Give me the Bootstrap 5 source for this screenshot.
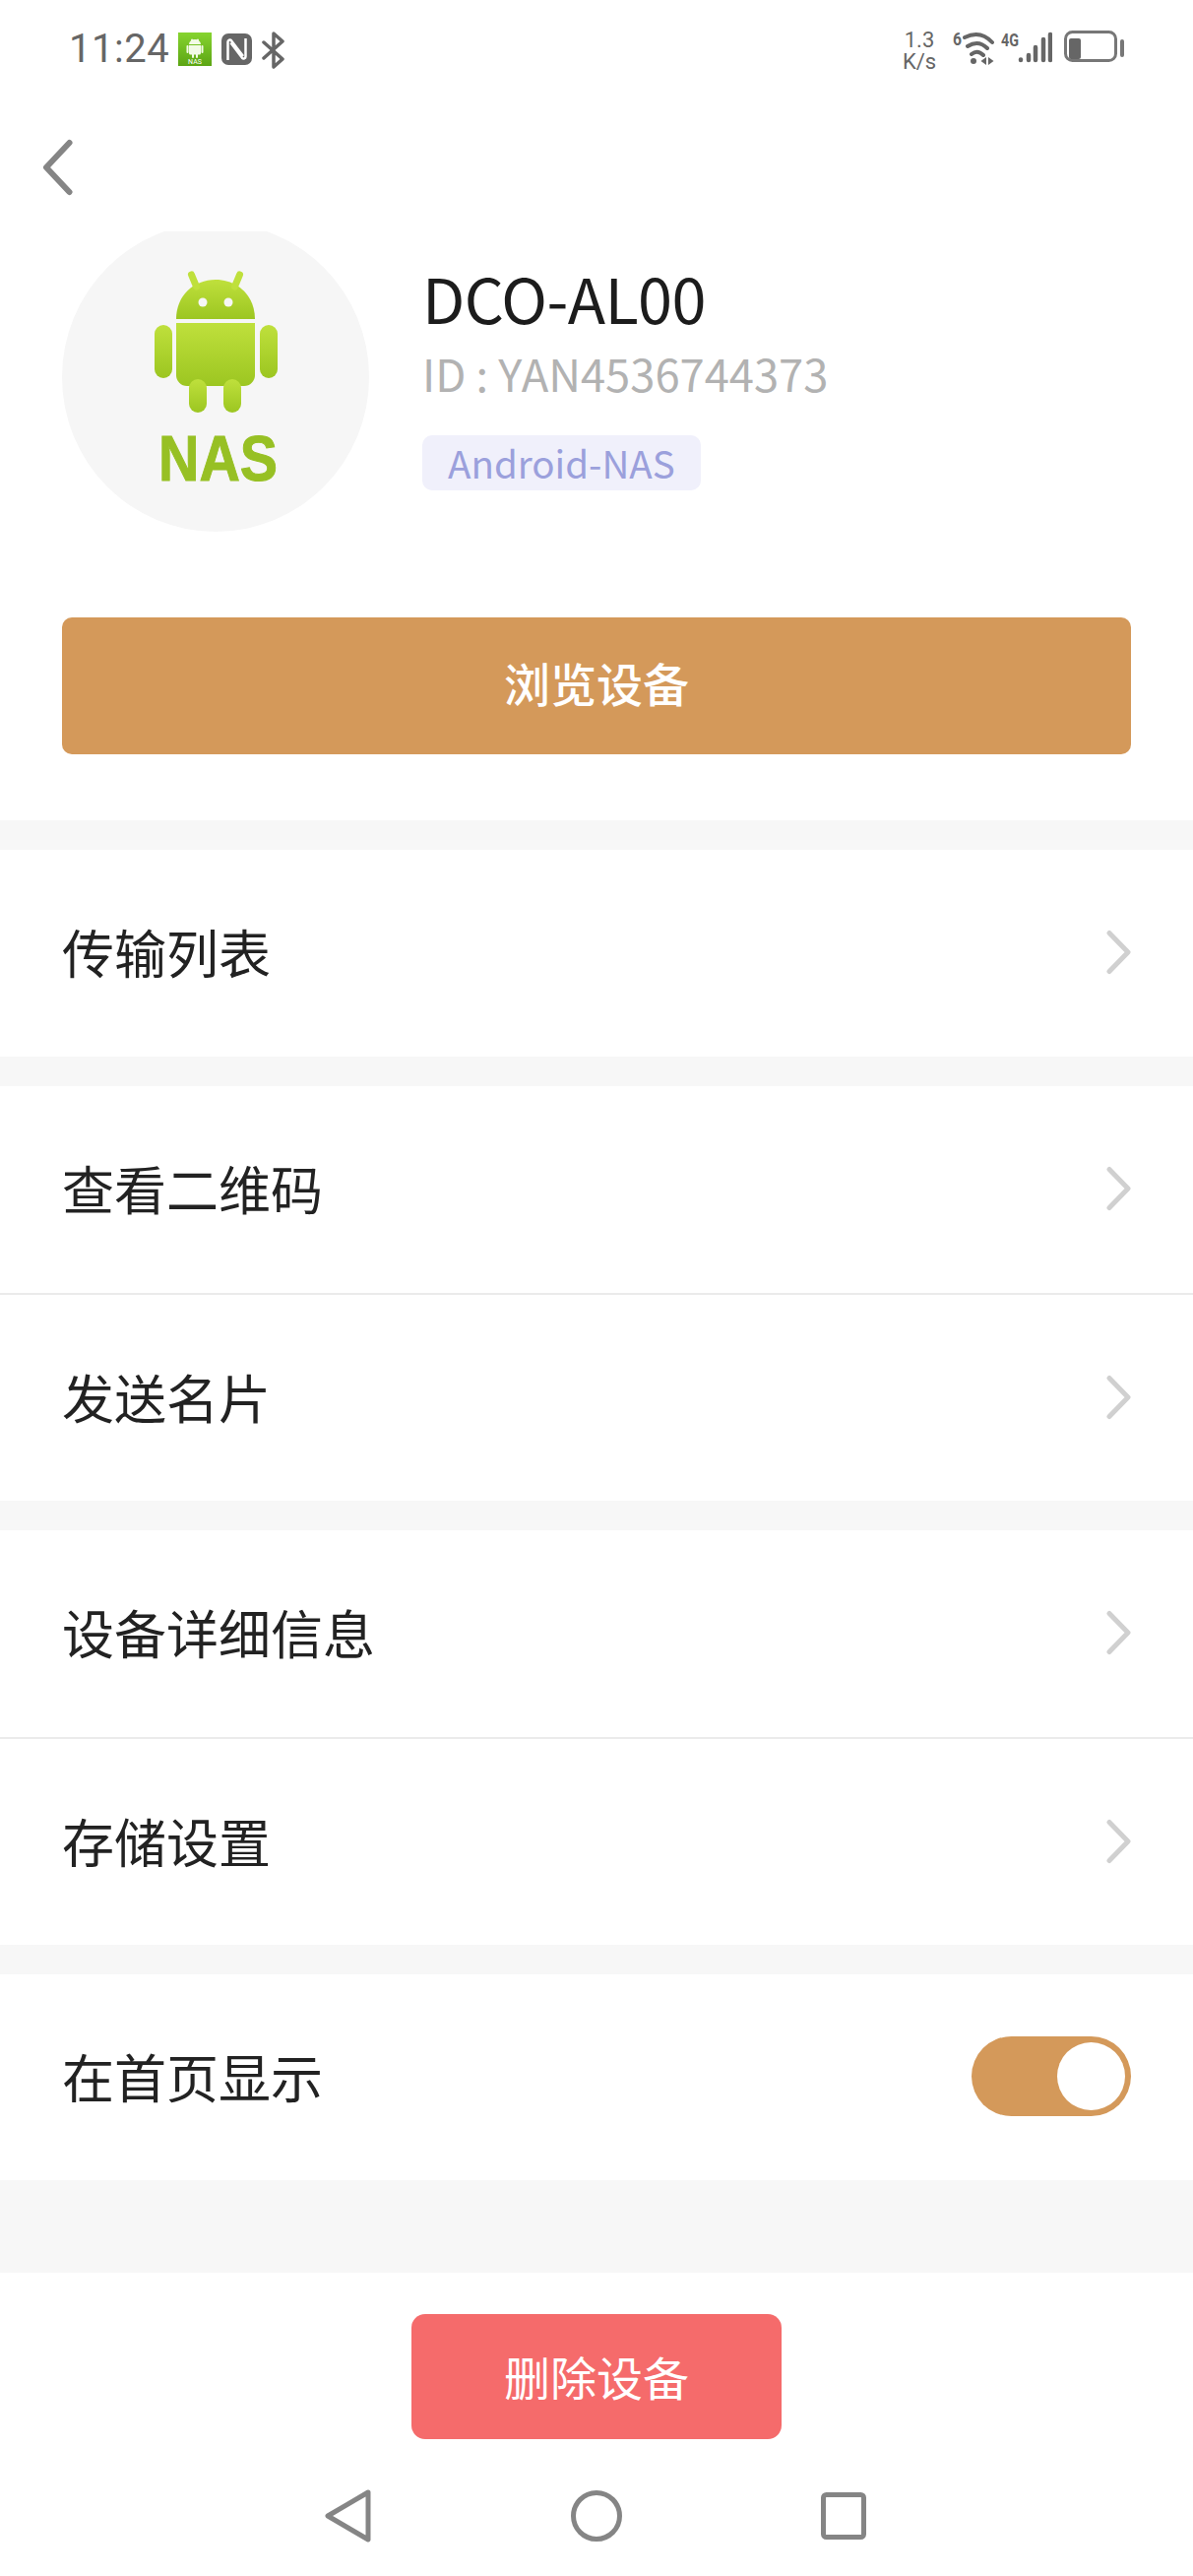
<!DOCTYPE html>
<html lang="zh-CN">
<head>
  <meta charset="UTF-8" />
  <meta name="viewport" content="width=device-width, initial-scale=1.0"/>
  <title>设备详情</title>
  <link href="https://cdn.jsdelivr.net/npm/bootstrap@5.3.2/dist/css/bootstrap.min.css" rel="stylesheet" />
  <style>
    body {
      background-color: #fff;
      font-family: "Noto Sans CJK SC", "Noto Sans", sans-serif;
      color: #222;
    }

    .phone { width: 1212px; height: 2616px; overflow: hidden; }

    .status-bar { height: 100px; padding: 30px 70px 0 70px; }
    .status-time { font-family: Roboto, sans-serif; font-size: 40px; line-height: 40px; color: #666; letter-spacing: .5px; width: 111px; }
    .speed { font-family: Roboto, sans-serif; font-size: 22px; line-height: 22px; color: #666; text-align: center; width: 36px; }

    .back-row { height: 135px; padding-left: 43px; padding-top: 41px; }

    .device-head { padding-left: 63px; }
    .avatar { width: 312px; height: 305px; flex: none; }
    .device-info { margin-left: 54px; padding-top: 32px; }
    .device-name { font-size: 63px; line-height: 70px; color: #1c1c1c; letter-spacing: -.6px; }
    .device-id { font-size: 45.300px; line-height: 50px; color: #b2b2b2; margin-top: 16px; }
    .device-tag { display: inline-block; height: 56px; line-height: 54px; padding: 0 26px; font-size: 38.500px; color: #9ba0dc; background: #f0f0fb; border-radius: 10px; margin-top: 39px; }

    .browse-btn { display: block; width: 1086px; height: 139px; margin: 87px 0 67px 63px; padding: 0 0 6px; background: #d4995a; border: 0; border-radius: 10px; color: #fff; font-size: 47px; font-weight: 500; }
    .browse-btn:hover { background: #d4995a; color: #fff; }

    .menu-band { height: 30px; background: #f7f7f7; }
    .menu-row { height: 210px; padding: 0 63px 2px; font-size: 53px; color: #222; }
    .menu-row + .menu-row { border-top: 2px solid #ebebeb; height: 211px; }
    .menu-row-last { height: 209px; }

    .switch-pill { width: 162px; height: 81px; border-radius: 41px; background: #d4995a; padding: 6px; }
    .switch-knob { width: 69px; height: 69px; border-radius: 50%; background: #fff; }

    .end-band { height: 94px; background: #f7f7f7; }
    .delete-wrap { padding-top: 42px; }
    .delete-btn { width: 376px; height: 127px; padding: 0; background: #f56b6b; border: 0; border-radius: 14px; color: #fff; font-size: 47px; }
    .delete-btn:hover { background: #f56b6b; color: #fff; }

    .nav-bar { margin-top: 51px; padding: 0 332px 0 330px; }
  </style>
</head>
<body>
  <div class="phone">
    <div class="status-bar d-flex justify-content-between">
      <div class="d-flex align-items-start">
        <span class="status-time">11:24</span>
        <svg width="34" height="34" viewBox="0 0 34 34" style="margin-top:3px">
          <defs><linearGradient id="tile" x1="0" y1="0" x2="0" y2="1"><stop offset="0" stop-color="#86d42f"/><stop offset="1" stop-color="#5ca514"/></linearGradient></defs>
          <rect width="34" height="34" fill="url(#tile)"/>
          <path d="M11 12a6 5 0 0 1 12 0zM11 13h12v8a1.500 1.500 0 0 1-1.500 1.500h-9A1.500 1.500 0 0 1 11 21z" fill="#f2fbe6"/>
          <path d="M9.500 14v6M24.500 14v6M15 22v3M19 22v3M14 7.500l1.500 2.500M20 7.500l-1.500 2.500" stroke="#f2fbe6" stroke-width="2" stroke-linecap="round"/>
          <text x="17" y="32" font-size="7" text-anchor="middle" fill="#fff" font-family="Roboto, sans-serif">NAS</text>
        </svg>
        <svg width="31" height="32" viewBox="0 0 31 32" style="margin:4px 0 0 10px">
          <rect width="31" height="32" rx="7" fill="#666"/>
          <path d="M6.500 27V8.500a2 2 0 0 1 3.500-1.300L22 23M24.500 5v18.500a2 2 0 0 1-3.500 1.300L9.500 9.500" fill="none" stroke="#fff" stroke-width="2.500"/>
        </svg>
        <svg width="24" height="38" viewBox="0 0 24 38" style="margin:2px 0 0 10px">
          <path d="M2 11l19 17-9 8V2l9 8L2 27" fill="none" stroke="#666" stroke-width="3.500" stroke-linecap="round" stroke-linejoin="round"/>
        </svg>
      </div>
      <div class="d-flex align-items-start">
        <div class="speed">1.3<br>K/s</div>
        <svg width="44" height="40" viewBox="0 0 44 40" style="margin-left:16px">
          <text x="0" y="16" font-size="18" font-weight="700" fill="#666" font-family="Roboto, sans-serif" textLength="9" lengthAdjust="spacingAndGlyphs">6</text>
          <path d="M12 8Q28 0 40 13M15 17Q26 10 35 19M19 25Q25 20 31 26" fill="none" stroke="#666" stroke-width="4" stroke-linecap="round"/>
          <circle cx="21" cy="32" r="3" fill="#666"/>
          <path d="M34 28v8l-5.500-4zM36 28v8l5.500-4z" fill="#666"/>
        </svg>
        <svg width="52" height="34" viewBox="0 0 52 34" style="margin-left:5px">
          <text x="0" y="17" font-size="18" font-weight="700" fill="#666" font-family="Roboto, sans-serif" textLength="18" lengthAdjust="spacingAndGlyphs">4G</text>
          <path d="M21 30.500v.5M29 26v5M36 18v13M44 10v21M51 5v26" transform="translate(-1 0)" stroke="#666" stroke-width="4.500" stroke-linecap="round"/>
        </svg>
        <svg width="62" height="34" viewBox="0 0 62 34" style="margin-left:11px">
          <rect x="2.500" y="2.500" width="51" height="29" rx="7" fill="none" stroke="#777" stroke-width="3"/>
          <rect x="6" y="9" width="12" height="21" rx="2" fill="#666"/>
          <rect x="58" y="10" width="4" height="18" rx="2" fill="#777"/>
        </svg>
      </div>
    </div>

    <div class="back-row">
      <svg width="31" height="58" viewBox="0 0 31 58">
        <path d="M27.500 4L4 29l23.500 25" fill="none" stroke="#858585" stroke-width="6" stroke-linecap="round" stroke-linejoin="round"/>
      </svg>
    </div>

    <div class="device-head d-flex">
      <div class="avatar">
        <svg width="312" height="305" viewBox="0 0 312 305">
          <defs><linearGradient id="droid" x1="0" y1="0" x2="0" y2="1"><stop offset="0" stop-color="#bfe03c"/><stop offset="1" stop-color="#9cc621"/></linearGradient></defs>
          <ellipse cx="156" cy="148" rx="156" ry="157" fill="#f6f6f6"/>
          <g fill="url(#droid)">
            <path d="M116 89c0-24 18-40 40-40s40 16 40 40z"/>
            <path d="M116 93h80v53a11 11 0 0 1-11 11h-58a11 11 0 0 1-11-11z"/>
            <rect x="94" y="95" width="18" height="54" rx="9"/>
            <rect x="201" y="95" width="18" height="54" rx="9"/>
            <rect x="129" y="150" width="18" height="34" rx="9"/>
            <rect x="164" y="150" width="18" height="34" rx="9"/>
          </g>
          <path d="M131.500 44l5 12M180.500 44l-5 12" stroke="#bfe03c" stroke-width="7" stroke-linecap="round"/>
          <circle cx="143" cy="72" r="4.500" fill="#f6f6f6"/>
          <circle cx="169" cy="72" r="4.500" fill="#f6f6f6"/>
          <text x="98" y="253" font-size="65" font-weight="700" fill="#97c024" stroke="#97c024" stroke-width="1" font-family="'Liberation Sans', sans-serif" textLength="121" lengthAdjust="spacingAndGlyphs">NAS</text>
        </svg>
      </div>
      <div class="device-info">
        <div class="device-name">DCO-AL00</div>
        <div class="device-id">ID : YAN4536744373</div>
        <div><span class="device-tag">Android-NAS</span></div>
      </div>
    </div>

    <button class="btn browse-btn">浏览设备</button>

    <div class="menu-band"></div>
    <div class="menu-row d-flex align-items-center justify-content-between">传输列表
      <svg width="25" height="46" viewBox="0 0 25 46"><path d="M3 3.500l19 19.500L3 42.500" fill="none" stroke="#d0d0d0" stroke-width="5" stroke-linecap="round" stroke-linejoin="round"/></svg>
    </div>
    <div class="menu-band"></div>
    <div class="menu-row d-flex align-items-center justify-content-between">查看二维码
      <svg width="25" height="46" viewBox="0 0 25 46"><path d="M3 3.500l19 19.500L3 42.500" fill="none" stroke="#d0d0d0" stroke-width="5" stroke-linecap="round" stroke-linejoin="round"/></svg>
    </div>
    <div class="menu-row d-flex align-items-center justify-content-between">发送名片
      <svg width="25" height="46" viewBox="0 0 25 46"><path d="M3 3.500l19 19.500L3 42.500" fill="none" stroke="#d0d0d0" stroke-width="5" stroke-linecap="round" stroke-linejoin="round"/></svg>
    </div>
    <div class="menu-band"></div>
    <div class="menu-row d-flex align-items-center justify-content-between">设备详细信息
      <svg width="25" height="46" viewBox="0 0 25 46"><path d="M3 3.500l19 19.500L3 42.500" fill="none" stroke="#d0d0d0" stroke-width="5" stroke-linecap="round" stroke-linejoin="round"/></svg>
    </div>
    <div class="menu-row d-flex align-items-center justify-content-between">存储设置
      <svg width="25" height="46" viewBox="0 0 25 46"><path d="M3 3.500l19 19.500L3 42.500" fill="none" stroke="#d0d0d0" stroke-width="5" stroke-linecap="round" stroke-linejoin="round"/></svg>
    </div>
    <div class="menu-band"></div>
    <div class="menu-row menu-row-last d-flex align-items-center justify-content-between">在首页显示
      <div class="switch-pill d-flex justify-content-end"><div class="switch-knob"></div></div>
    </div>
    <div class="end-band"></div>

    <div class="delete-wrap">
      <button class="btn delete-btn d-block mx-auto">删除设备</button>
    </div>

    <div class="nav-bar d-flex justify-content-between align-items-center">
      <svg width="48" height="54" viewBox="0 0 48 54"><path d="M44 3L3 27l41 24z" fill="none" stroke="#858585" stroke-width="5" stroke-linejoin="round"/></svg>
      <svg width="52" height="52" viewBox="0 0 52 52"><circle cx="26" cy="26" r="23.500" fill="none" stroke="#858585" stroke-width="5"/></svg>
      <svg width="46" height="48" viewBox="0 0 46 48"><rect x="2.500" y="2.500" width="41" height="43" rx="3" fill="none" stroke="#858585" stroke-width="5"/></svg>
    </div>
  </div>
</body>
</html>
